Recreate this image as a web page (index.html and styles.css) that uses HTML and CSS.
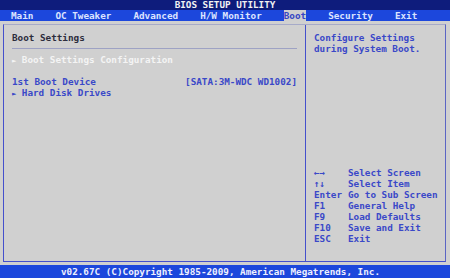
FILE: index.html
```html
<!DOCTYPE html>
<html lang="en">
<head>
    <link rel="stylesheet" href="styles.css">
</head>
<body>
    <div class="screen">
        <div class="title">BIOS SETUP UTILITY</div>
        <div class="menu">
            <span class="tab">Main</span>
            <span class="tab">OC Tweaker</span>
            <span class="tab">Advanced</span>
            <span class="tab">H/W Monitor</span>
            <span class="tab active">Boot</span>
            <span class="tab">Security</span>
            <span class="tab">Exit</span>
        </div>
        <div class="main">
            <div class="panel">
                <div class="left">
                    <div class="row heading">Boot Settings</div>
                    <div class="rule"></div>
                    <div class="row sub"><span class="arrow">►</span> Boot Settings Configuration</div>
                    <div class="row"></div>
                    <div class="row item">
                        <span>1st Boot Device</span>
                        <span>[SATA:3M-WDC WD1002]</span>
                    </div>
                    <div class="row item"><span><span class="arrow">►</span> Hard Disk Drives</span></div>
                </div>
                <div class="right">
                    <div class="help">
                        <div class="row">Configure Settings</div>
                        <div class="row">during System Boot.</div>
                    </div>
                    <div class="keys">
                        <span>←→</span><span>Select Screen</span>
                        <span>↑↓</span><span>Select Item</span>
                        <span>Enter</span><span>Go to Sub Screen</span>
                        <span>F1</span><span>General Help</span>
                        <span>F9</span><span>Load Defaults</span>
                        <span>F10</span><span>Save and Exit</span>
                        <span>ESC</span><span>Exit</span>
                    </div>
                </div>
            </div>
        </div>
        <div class="footer">v02.67C (C)Copyright 1985-2009, American Megatrends, Inc.</div>
    </div>
</body>
</html>
```

FILE: styles.css
```css
body {
    margin: 0;
    font-family: "DejaVu Sans Mono", "Liberation Mono", monospace;
    font-size: 9.3px;
    font-weight: bold;
}
.screen {
    width: 450px;
    height: 278px;
    display: flex;
    flex-direction: column;
    background-color: #d0d0d0;
    overflow: hidden;
}
.title {
    height: 10px;
    line-height: 10px;
    background-color: #0e1c7c;
    color: #f2f2f2;
    text-align: center;
}
.menu {
    height: 11px;
    line-height: 11px;
    display: flex;
    gap: 22px;
    padding-left: 11px;
    background-color: #1c47dc;
    color: #dce4ff;
}
.tab.active {
    background-color: #cfcfcf;
    color: #3546c4;
}
.main {
    flex: 1;
    padding: 3px 4px 3px 3px;
}
.panel {
    height: 100%;
    box-sizing: border-box;
    display: flex;
    border: 1px solid #4450cc;
    border-top-color: #a6aac8;
    border-right-color: #5a64c4;
}
.left {
    width: 302px;
    box-sizing: border-box;
    border-right: 1px solid #4450cc;
    padding: 7px 8px 0 8px;
}
.right {
    flex: 1;
    display: flex;
    flex-direction: column;
    padding: 7px 0 17px 8px;
    color: #3a48c8;
}
.row {
    height: 11px;
    line-height: 11px;
}
.heading {
    color: #2c2c3c;
}
.rule {
    height: 1px;
    margin: 5px 0 5px 0;
    background-color: #9ea2c4;
}
.sub {
    color: #f4f4f4;
}
.arrow {
    font-size: 7px;
}
.item {
    display: flex;
    justify-content: space-between;
    color: #3a48c8;
}
.keys {
    margin-top: auto;
    display: grid;
    grid-template-columns: 34px auto;
    line-height: 11px;
}
.footer {
    height: 13px;
    line-height: 13px;
    padding-right: 9px;
    background-color: #1c47dc;
    color: #eef0ff;
    text-align: center;
}
```
